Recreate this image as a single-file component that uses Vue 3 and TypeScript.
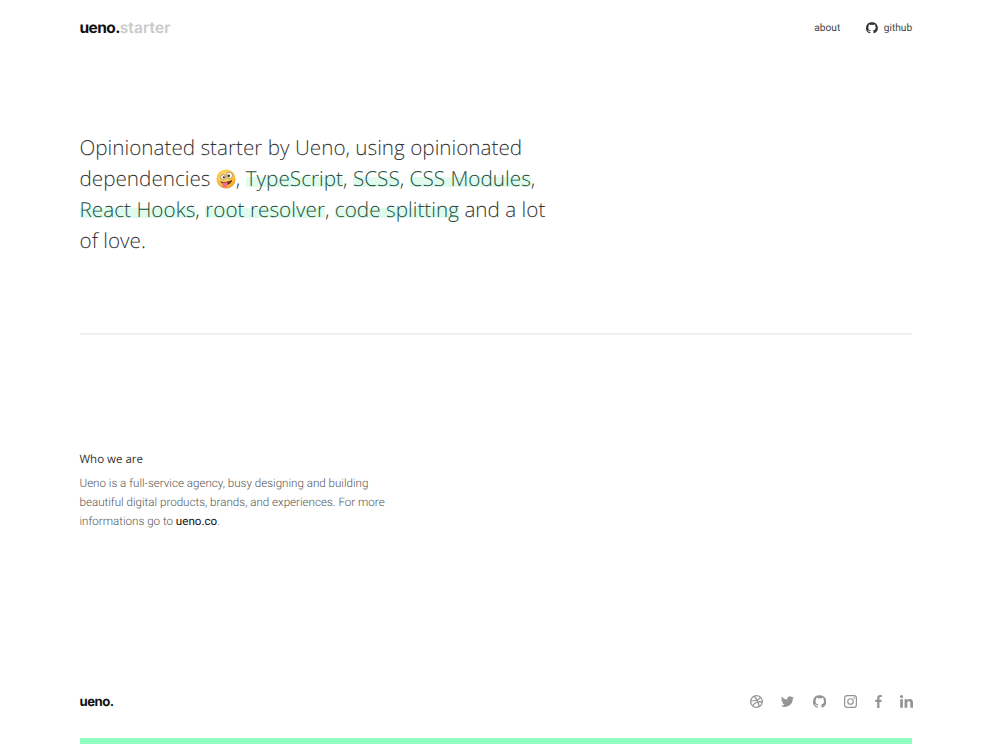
<script setup lang="ts">
interface Social {
  name: string
  path: string
  box?: string
}

const socials: Social[] = [
  { name: 'dribbble', path: 'M8 1a7 7 0 1 0 0 14A7 7 0 0 0 8 1zm0 1.4c1.3 0 2.5.4 3.500 1.200-.6.8-1.500 1.500-2.800 2C8.100 4.400 7.400 3.300 6.700 2.600 7.100 2.500 7.500 2.400 8 2.400zM5.400 3.100c.7.700 1.400 1.800 2 3-1.700.5-3.500.7-4.900.7C2.900 5.700 4 3.900 5.400 3.100zM2.400 8v-.1c1.700 0 3.800-.2 5.600-.8l.5 1.100C6.400 8.900 4.800 10.200 3.700 11.700 2.900 10.700 2.400 9.400 2.400 8zm2.300 4.700c1-1.500 2.400-2.600 4.300-3.300.5 1.300.8 2.700 1 3.800-.6.300-1.300.4-2 .4-1.200 0-2.400-.3-3.300-.9zm6.600-.2c-.2-1.100-.5-2.300-.9-3.400 1.200-.2 2.400-.1 3.100.1-.3 1.400-1.100 2.600-2.200 3.300zM10 7.900l-.5-1.200c1.300-.6 2.300-1.300 3-2.200.7.900 1.100 2 1.100 3.200-1-.2-2.300-.1-3.600.2z', box: '1 1 14 14' },
  { name: 'twitter', path: 'M15.500 3.400c-.6.300-1.200.4-1.800.5.600-.4 1.100-1 1.400-1.700-.6.400-1.300.6-2 .8a3.100 3.100 0 0 0-5.300 2.800A8.800 8.800 0 0 1 1.400 2.500a3.100 3.100 0 0 0 1 4.100c-.5 0-1-.1-1.400-.4 0 1.500 1.100 2.800 2.500 3.100-.5.100-.9.100-1.400.1.400 1.200 1.500 2.100 2.900 2.100A6.200 6.200 0 0 1 .5 12.800a8.800 8.800 0 0 0 13.500-7.800c.6-.4 1.100-1 1.500-1.600z', box: '.5 .5 15 15' },
  { name: 'github', path: 'M8 .7a7.500 7.500 0 0 0-2.400 14.600c.4.100.5-.2.500-.4v-1.300c-2.100.5-2.500-1-2.500-1-.3-.9-.8-1.100-.8-1.100-.7-.5 0-.5 0-.5.800.1 1.200.8 1.200.8.700 1.200 1.800.8 2.300.6.100-.5.300-.8.500-1-1.700-.2-3.400-.8-3.400-3.700 0-.8.300-1.500.8-2-.1-.2-.3-1 .1-2 0 0 .6-.2 2.100.8a7.300 7.300 0 0 1 3.800 0c1.400-1 2.100-.8 2.100-.8.400 1 .2 1.800.1 2 .5.500.8 1.200.8 2 0 2.900-1.800 3.500-3.400 3.700.3.200.5.700.5 1.400v2.100c0 .2.100.5.500.4A7.500 7.500 0 0 0 8 .7z', box: '.5 .5 15 15' },
  { name: 'instagram', path: 'M4.500 1h7A3.500 3.500 0 0 1 15 4.500v7a3.500 3.500 0 0 1-3.500 3.500h-7A3.500 3.500 0 0 1 1 11.500v-7A3.500 3.500 0 0 1 4.500 1zm0 1.300c-1.200 0-2.200 1-2.200 2.200v7c0 1.200 1 2.200 2.200 2.200h7c1.200 0 2.200-1 2.200-2.200v-7c0-1.200-1-2.200-2.200-2.200h-7zM8 4.400a3.600 3.600 0 1 1 0 7.200 3.600 3.600 0 0 1 0-7.200zm0 1.300a2.300 2.300 0 1 0 0 4.600 2.300 2.300 0 0 0 0-4.600zm3.800-2.400a.9.9 0 1 1 0 1.800.9.900 0 0 1 0-1.800z', box: '1 1 14 14' },
  { name: 'facebook', path: 'M9.600 15.500V8.700h2.200l.3-2.600H9.600V4.500c0-.8.200-1.300 1.300-1.300h1.300V.9c-.2 0-1-.1-1.900-.1-1.900 0-3.300 1.200-3.300 3.400v1.900H4.800v2.600H7v6.800h2.600z', box: '4.800 .8 7.400 14.700' },
  { name: 'linkedin', path: 'M1 5.400h3v9.600H1V5.400zM2.500.8a1.700 1.700 0 1 1 0 3.500 1.700 1.700 0 0 1 0-3.500zM5.900 5.400h2.900v1.300c.4-.8 1.400-1.500 2.900-1.500 3 0 3.600 2 3.600 4.600V15h-3v-4.700c0-1.100 0-2.600-1.600-2.600s-1.800 1.200-1.800 2.500V15h-3V5.400z', box: '.8 .8 14.500 14.400' },
]

const githubPath = socials[2].path
</script>

<template>
  <div class="layout">
    <header class="header">
      <a class="logo">ueno.<span class="logo-sub">starter</span></a>
      <nav class="nav">
        <a class="nav-link">about</a>
        <a class="nav-link">
          <svg class="nav-icon" viewBox=".5 .5 15 15"><path :d="githubPath" /></svg>
          github
        </a>
      </nav>
    </header>

    <main class="content">
      <section class="intro">
        <h1 class="intro-text">
          Opinionated starter by Ueno, using opinionated dependencies
          <svg class="emoji" viewBox="0 0 24 24">
            <defs>
              <radialGradient id="face" cx="0.45" cy="0.35" r="0.7">
                <stop offset="0" stop-color="#ffe27a" />
                <stop offset="0.7" stop-color="#f9bd3d" />
                <stop offset="1" stop-color="#e08e1e" />
              </radialGradient>
            </defs>
            <circle cx="12" cy="12" r="11.500" fill="url(#face)" />
            <circle cx="8.600" cy="9.800" r="3" fill="#fff" stroke="#7a4a12" stroke-width="0.600" />
            <circle cx="16" cy="7.600" r="3.800" fill="#fff" stroke="#7a4a12" stroke-width="0.600" />
            <circle cx="9.400" cy="10" r="1.300" fill="#3a2a1a" />
            <circle cx="15.200" cy="8.200" r="1.600" fill="#3a2a1a" />
            <path d="M5 14.500c3 1.800 9 1.200 14.500-1.600-.5 3.500-3 5.500-6 6-3.500.5-7-1-8.500-4.400z" fill="#6b3410" />
            <path d="M7.500 16.500c2-.2 4.200-.5 6-1 .4 2 .2 5-1.800 6.300-2.200 1.300-3.800-.3-4-2.300-.1-1.100-.2-2-.2-3z" fill="#ef6a8e" />
          </svg>,
          <span class="mark">TypeScript</span>, <span class="mark">SCSS</span>,
          <span class="mark">CSS Modules</span>, <span class="mark">React Hooks</span>,
          <span class="mark">root resolver</span>, <span class="mark">code splitting</span>
          and a lot of love.
        </h1>
      </section>

      <section class="about">
        <h2 class="about-title">Who we are</h2>
        <p class="about-text">
          Ueno is a full-service agency, busy designing and building beautiful digital products,
          brands, and experiences. For more informations go to <a class="about-link">ueno.co</a>.
        </p>
      </section>
    </main>

    <footer class="footer">
      <div class="footer-row">
        <a class="logo logo-small">ueno.</a>
        <ul class="socials">
          <li v-for="social in socials" :key="social.name" class="social">
            <svg :viewBox="social.box" class="social-icon" :class="`social-${social.name}`"><path :d="social.path" fill-rule="evenodd" /></svg>
          </li>
        </ul>
      </div>
      <div class="footer-bar"></div>
    </footer>
  </div>
</template>

<style>
html,
body {
  margin: 0;
  background: #fff;
}
</style>

<style scoped>
.layout {
  display: flex;
  flex-direction: column;
  height: 744px;
  padding: 0 79.8px 0 79.5px;
  overflow: hidden;
  box-sizing: border-box;
  font-family: Roboto, "Liberation Sans", sans-serif;
  text-rendering: geometricPrecision;
}

.header {
  display: flex;
  justify-content: space-between;
  align-items: center;
  height: 54px;
  margin-bottom: 2px;
}

.logo {
  font-family: Inter, "Liberation Sans", sans-serif;
  font-size: 15.500px;
  font-weight: 700;
  letter-spacing: -0.6px;
  color: #111;
}

.logo-small {
  font-size: 13.200px;
  letter-spacing: -0.5px;
  padding-top: 1px;
}

.logo-sub {
  color: #c9c9c9;
  font-weight: 600;
  letter-spacing: 0.1px;
}

.nav {
  display: flex;
  align-items: center;
  gap: 26px;
  padding-top: 2px;
}

.nav-link {
  display: flex;
  align-items: center;
  gap: 6px;
  font-size: 10.200px;
  color: #444;
}

.nav-icon {
  width: 11.500px;
  height: 11.500px;
  fill: #333;
}

.content {
  flex: 1;
}

.intro {
  padding: 77px 0 76px;
  border-bottom: 2px solid #f0f0f0;
}

.intro-text {
  width: 480px;
  margin: 0;
  font-family: "Open Sans", sans-serif;
  font-size: 20.700px;
  font-weight: 300;
  line-height: 31px;
  color: #333;
}

.emoji {
  width: 20px;
  height: 20px;
  vertical-align: -3px;
}

.mark {
  color: #24503c;
  letter-spacing: 0.03px;
  background: linear-gradient(transparent 42%, #dffbee 42%, #dffbee 79%, transparent 79%);
}

.about {
  width: 320px;
  padding-top: 115px;
}

.about-title {
  margin: 0 0 5px;
  font-family: "Open Sans", sans-serif;
  font-size: 11.500px;
  font-weight: 400;
  line-height: 19px;
  color: #333;
}

.about-text {
  margin: 0;
  font-size: 11.600px;
  font-weight: 300;
  line-height: 19px;
  color: #555;
}

.about-link {
  font-weight: 400;
  color: #111;
}

.footer-row {
  display: flex;
  justify-content: space-between;
  align-items: center;
  height: 30px;
  margin-bottom: 21.500px;
}

.socials {
  display: flex;
  align-items: center;
  gap: 18.200px;
  margin: 0 -1px 0 0;
  padding: 0;
  list-style: none;
}

.social {
  display: flex;
}

.social-icon {
  width: 13px;
  height: 13px;
  fill: #949494;
}

.social-facebook {
  width: 7px;
}

.footer-bar {
  height: 6px;
  background: #8effc1;
}
</style>
